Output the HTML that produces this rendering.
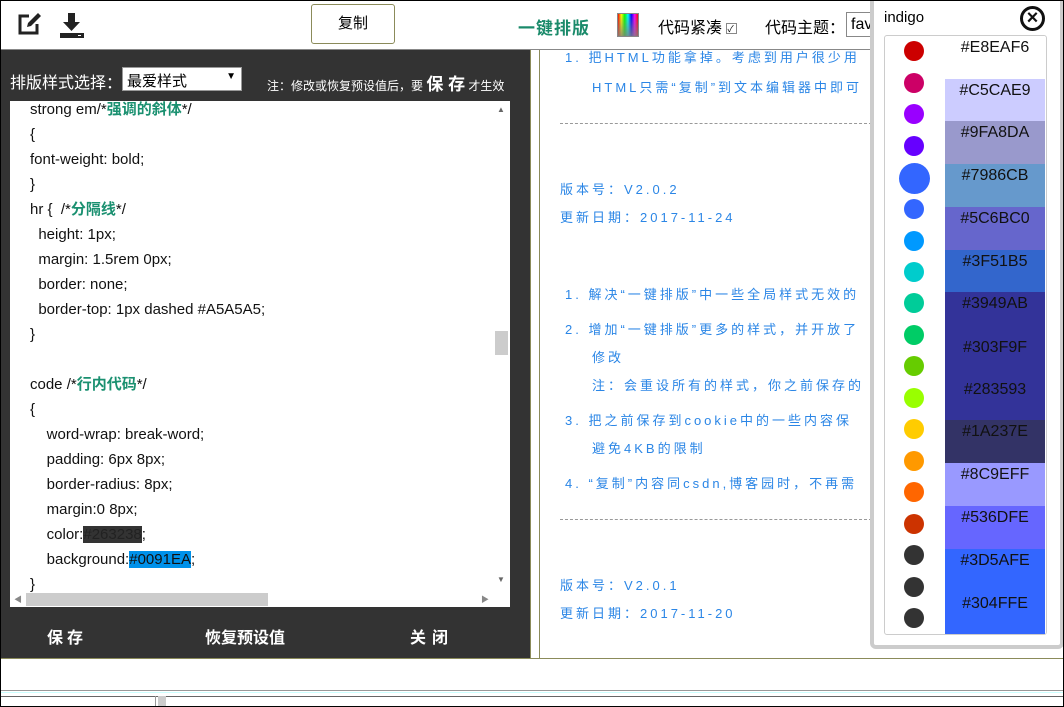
<!DOCTYPE html>
<html><head><meta charset="utf-8"><style>
*{margin:0;padding:0;box-sizing:border-box}
body{width:1064px;height:707px;overflow:hidden;background:#fff;font-family:"Liberation Sans","Noto Sans CJK SC",sans-serif;position:relative}
.a{position:absolute}
.code div{height:25px;line-height:25px;font-size:15px;color:#111;white-space:pre}
.g{color:#1a9070;font-weight:bold}
.r{color:#8b0000}
.rt{color:#2b86e6;font-size:13px;letter-spacing:3px}
.dot{position:absolute;width:20px;height:20px;border-radius:50%;left:904px}
.sw{position:absolute;left:945px;width:100px;height:43px;font-size:16px;color:#111;text-align:center;padding-top:3px}
</style></head><body>
<svg class="a" style="left:17px;top:12px" width="26" height="24" viewBox="0 0 26 24"><path d="M12 4H3v17h17v-9" fill="none" stroke="#222" stroke-width="3"/><path d="M10 15l1-4L21 1l3 3-10 10z" fill="#222"/></svg>
<svg class="a" style="left:59px;top:12px" width="26" height="26" viewBox="0 0 26 26"><path d="M9 1h7v9h5l-8.5 9L4 10h5z" fill="#222"/><rect x="1" y="21" width="24" height="5" fill="#222"/><rect x="19" y="23" width="3" height="1" fill="#fff"/></svg>
<div class="a" style="left:311px;top:4px;width:84px;height:40px;border:1px solid #8b8b5a;border-radius:3px;text-align:center;line-height:38px;font-size:15px">复制</div>
<div class="a" style="left:518px;top:14px;font-size:17px;color:#1a8a6a;font-weight:bold;letter-spacing:1px">一键排版</div>
<div class="a" style="left:617px;top:13px;width:22px;height:24px;border:1px solid #888;background:linear-gradient(90deg,#f00,#ff0,#0f0,#0ff,#00f,#f0f,#f00)"><div style="width:100%;height:100%;background:linear-gradient(transparent,rgba(128,128,128,.8))"></div></div>
<div class="a" style="left:658px;top:14px;font-size:16px">代码紧凑 <span style="display:inline-block;width:11px;height:11px;border:1px solid #888;font-size:9px;line-height:10px;vertical-align:1px">✓</span></div>
<div class="a" style="left:765px;top:14px;font-size:16px">代码主题：</div>
<div class="a" style="left:846px;top:12px;width:40px;height:25px;border:1px solid #888;font-size:16px;padding:3px 4px">fav</div>
<div class="a" style="left:0;top:49px;width:1064px;height:1px;background:#888"></div>
<div class="a" style="left:0;top:50px;width:531px;height:608px;background:#333;border-right:1px solid #8b8b5a"></div>
<div class="a" style="left:10px;top:69px;color:#fff;font-size:16px">排版样式选择：</div>
<div class="a" style="left:122px;top:67px;width:120px;height:24px;background:#fff;border:1px solid #999;font-size:15px;padding:2px 4px">最爱样式<span style="position:absolute;right:5px;top:3px;font-size:10px">▼</span></div>
<div class="a" style="left:267px;top:70px;color:#fff;font-size:12px">注：修改或恢复预设值后，要 <b style="font-size:17px">保 存</b> 才生效</div>
<div class="a" style="left:10px;top:101px;width:500px;height:506px;background:#fff"></div>
<div class="a code" style="left:30px;top:97px">
<div>strong em/*<span class="g">强调的斜体</span>*/</div>
<div class="r">{</div>
<div>font-weight: bold;</div>
<div class="r">}</div>
<div>hr {  /*<span class="g">分隔线</span>*/</div>
<div>  height: 1px;</div>
<div>  margin: 1.5rem 0px;</div>
<div>  border: none;</div>
<div>  border-top: 1px dashed #A5A5A5;</div>
<div class="r">}</div>
<div> </div>
<div>code /*<span class="g">行内代码</span>*/</div>
<div class="r">{</div>
<div>    word-wrap: break-word;</div>
<div>    padding: 6px 8px;</div>
<div>    border-radius: 8px;</div>
<div>    margin:0 8px;</div>
<div>    color:<span style="background:#333;color:#222">#263238</span>;</div>
<div>    background:<span style="background:#0091EA;color:#111">#0091EA</span>;</div>
<div class="r">}</div>
</div>
<div class="a" style="left:497px;top:105px;font-size:8px;color:#666">▲</div>
<div class="a" style="left:497px;top:575px;font-size:8px;color:#666">▼</div>
<div class="a" style="left:495px;top:331px;width:13px;height:24px;background:#ccc"></div>
<div class="a" style="left:26px;top:593px;width:242px;height:13px;background:#ccc"></div>
<div class="a" style="left:14px;top:594px;font-size:8px;color:#888">◀</div>
<div class="a" style="left:481px;top:594px;font-size:8px;color:#888">▶</div>
<div class="a" style="left:47px;top:624px;color:#fff;font-size:16px;font-weight:bold;letter-spacing:4px">保存</div>
<div class="a" style="left:205px;top:624px;color:#fff;font-size:16px;font-weight:bold">恢复预设值</div>
<div class="a" style="left:410px;top:624px;color:#fff;font-size:16px;font-weight:bold;letter-spacing:6px">关闭</div>
<div class="a" style="left:539px;top:50px;width:1px;height:608px;background:#8b8b5a"></div>
<div class="a" style="left:0;top:658px;width:1064px;height:1px;background:#8b8b5a"></div>
<div class="a" style="left:0;top:690px;width:1064px;height:1px;background:#999"></div>
<div class="a" style="left:0;top:692px;width:1064px;height:1px;background:#cff"></div>
<div class="a" style="left:0;top:696px;width:1064px;height:1px;background:#666"></div>
<div class="a" style="left:155px;top:696px;width:1px;height:11px;background:#999"></div>
<div class="a" style="left:158px;top:696px;width:8px;height:11px;background:#ccc"></div>
<div class="a rt" style="left:565px;top:47px">1.  把HTML功能拿掉。考虑到用户很少用</div>
<div class="a rt" style="left:592px;top:77px">HTML只需“复制”到文本编辑器中即可</div>
<div class="a" style="left:560px;top:123px;width:312px;border-top:1px dashed #999"></div>
<div class="a rt" style="left:560px;top:179px">版本号：V2.0.2</div>
<div class="a rt" style="left:560px;top:207px">更新日期：2017-11-24</div>
<div class="a rt" style="left:565px;top:284px">1.  解决“一键排版”中一些全局样式无效的</div>
<div class="a rt" style="left:565px;top:319px">2.  增加“一键排版”更多的样式，并开放了</div>
<div class="a rt" style="left:592px;top:347px">修改</div>
<div class="a rt" style="left:592px;top:375px">注：会重设所有的样式，你之前保存的</div>
<div class="a rt" style="left:565px;top:410px">3.  把之前保存到cookie中的一些内容保</div>
<div class="a rt" style="left:592px;top:438px">避免4KB的限制</div>
<div class="a rt" style="left:565px;top:473px">4.  “复制”内容同csdn,博客园时，不再需</div>
<div class="a" style="left:560px;top:519px;width:312px;border-top:1px dashed #999"></div>
<div class="a rt" style="left:560px;top:575px">版本号：V2.0.1</div>
<div class="a rt" style="left:560px;top:603px">更新日期：2017-11-20</div>
<div class="a" style="left:870px;top:-5px;width:194px;height:654px;border:4px solid #ccc;border-radius:6px;background:#fff"></div>
<div class="a" style="left:884px;top:9px;font-size:15px">indigo</div>
<div class="a" style="left:1020px;top:6px;width:25px;height:25px;border-radius:50%;border:3px solid #111;background:#fff;color:#111;text-align:center;line-height:18px;font-size:20px;font-weight:bold">×</div>
<div class="a" style="left:884px;top:35px;width:163px;height:600px;border:1px solid #ccc;border-radius:3px"></div>
<div class="dot" style="top:41px;background:#c00"></div>
<div class="dot" style="top:73px;background:#c06"></div>
<div class="dot" style="top:104px;background:#90f"></div>
<div class="dot" style="top:136px;background:#60f"></div>
<div class="dot" style="top:163px;left:899px;width:31px;height:31px;background:#36f"></div>
<div class="dot" style="top:199px;background:#36f"></div>
<div class="dot" style="top:231px;background:#09f"></div>
<div class="dot" style="top:262px;background:#0cc"></div>
<div class="dot" style="top:293px;background:#0c9"></div>
<div class="dot" style="top:325px;background:#0c6"></div>
<div class="dot" style="top:356px;background:#6c0"></div>
<div class="dot" style="top:388px;background:#9f0"></div>
<div class="dot" style="top:419px;background:#fc0"></div>
<div class="dot" style="top:451px;background:#f90"></div>
<div class="dot" style="top:482px;background:#f60"></div>
<div class="dot" style="top:514px;background:#c30"></div>
<div class="dot" style="top:545px;background:#333"></div>
<div class="dot" style="top:577px;background:#333"></div>
<div class="dot" style="top:608px;background:#333"></div>
<div class="sw" style="top:36px;background:#fff">#E8EAF6</div>
<div class="sw" style="top:79px;background:#ccf">#C5CAE9</div>
<div class="sw" style="top:121px;background:#99c">#9FA8DA</div>
<div class="sw" style="top:164px;background:#69c">#7986CB</div>
<div class="sw" style="top:207px;background:#66c">#5C6BC0</div>
<div class="sw" style="top:250px;background:#36c">#3F51B5</div>
<div class="sw" style="top:292px;background:#339">#3949AB</div>
<div class="sw" style="top:335px;background:#339;padding-top:4px">#303F9F</div>
<div class="sw" style="top:377px;background:#339;padding-top:4px">#283593</div>
<div class="sw" style="top:420px;background:#336">#1A237E</div>
<div class="sw" style="top:463px;background:#99f">#8C9EFF</div>
<div class="sw" style="top:506px;background:#66f">#536DFE</div>
<div class="sw" style="top:549px;background:#36f">#3D5AFE</div>
<div class="sw" style="top:591px;background:#36f;padding-top:4px">#304FFE</div>
<div class="a" style="left:0;top:0;width:1064px;height:707px;border:1px solid #000;pointer-events:none"></div>
</body></html>
